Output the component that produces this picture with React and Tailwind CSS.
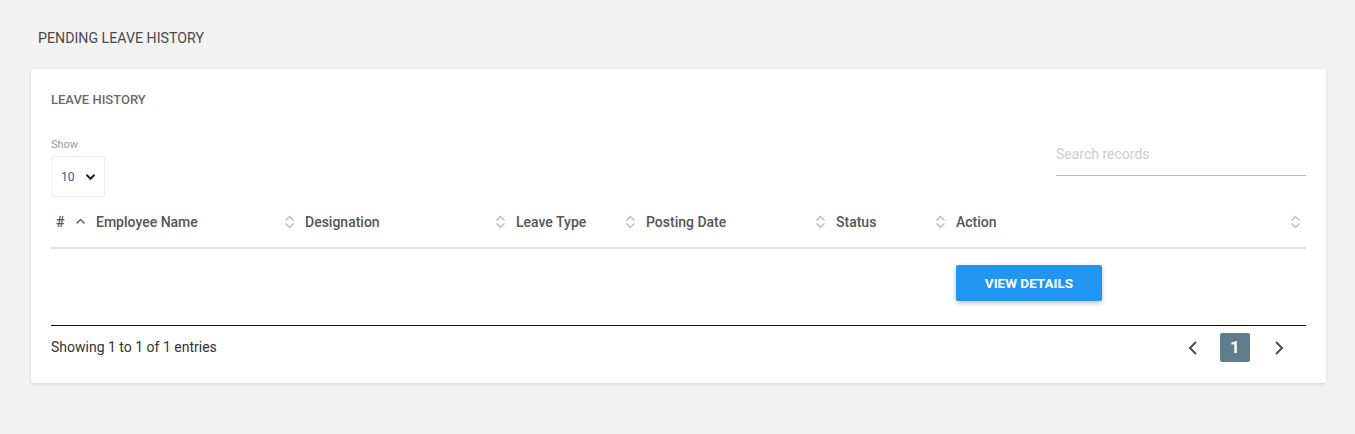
import React from 'react';

function SortIcon({ active }) {
  if (active) {
    return (
      <svg width="11" height="10" viewBox="0 0 11 10" className="text-[#666]">
        <path d="M1.5 6.5 L5.5 2.5 L9.5 6.5" fill="none" stroke="currentColor" strokeWidth="1.5" />
      </svg>
    );
  }
  return (
    <svg width="11" height="14" viewBox="0 0 11 14" className="text-[#bbb]">
      <path d="M1.5 5.5 L5.5 1.5 L9.5 5.5 M1.5 8.5 L5.5 12.5 L9.5 8.5" fill="none" stroke="currentColor" strokeWidth="1.3" />
    </svg>
  );
}

const columns = [
  { label: '#', width: 'w-[40px]', active: true },
  { label: 'Employee Name', width: 'w-[209px]' },
  { label: 'Designation', width: 'w-[211px]' },
  { label: 'Leave Type', width: 'w-[130px]' },
  { label: 'Posting Date', width: 'w-[190px]' },
  { label: 'Status', width: 'w-[120px]' },
  { label: 'Action', width: 'flex-1' },
];

export default function App() {
  return (
    <div className="min-h-[434px] bg-[#f3f3f3] px-[31px] pt-[29px] pb-[51px] font-['Roboto',sans-serif]">
      {/* Page title */}
      <h1 className="pl-[7px] text-[14.2px] leading-[18px] text-[#4a4a4a] uppercase mb-[22px]">
        Pending Leave History
      </h1>

      {/* Card */}
      <div className="w-[1295px] bg-white rounded-[2px] shadow-[0_1px_3px_rgba(0,0,0,0.15)] px-[20px] pt-[24px] pb-[21px]">
        <h2 className="text-[13px] leading-[14px] font-medium text-[#6b6b6b] uppercase mb-[32px]">
          Leave History
        </h2>

        {/* Controls */}
        <div className="flex justify-between items-end">
          <div>
            <div className="text-[11px] leading-[12px] text-[#999] mb-[5px]">Show</div>
            <div className="w-[54px] h-[41px] border border-[#eee] rounded-[2px] flex items-center justify-between pl-[9px] pr-[8px]">
              <span className="text-[12px] text-[#1d5ea8]">10</span>
              <svg width="11" height="8" viewBox="0 0 11 8" className="text-[#222]">
                <path d="M1.5 1.8 L5.5 5.8 L9.5 1.8" fill="none" stroke="currentColor" strokeWidth="2" />
              </svg>
            </div>
          </div>
          <div className="w-[250px] mb-[21px] border-b border-[#bbb] pb-[9px]">
            <input
              placeholder="Search records"
              className="w-full text-[14px] leading-[16px] text-[#333] placeholder:text-[#ccc] outline-none"
            />
          </div>
        </div>

        {/* Table header */}
        <div className="flex border-b-2 border-[#e3e3e3] h-[52px] items-center">
          {columns.map((col, i) => (
            <div key={i} className={`${col.width} flex items-center justify-between pl-[5px] pr-[5px] shrink-0`}>
              <span className="text-[14px] font-medium text-[#555]">{col.label}</span>
              <SortIcon active={col.active} />
            </div>
          ))}
        </div>

        {/* Row */}
        <div className="flex h-[77px] border-b border-[#111] pt-[16px]">
          <div className="w-[900px] shrink-0" />
          <div className="pl-[5px]">
            <button className="w-[146px] h-[36px] bg-[#2196f3] text-white text-[13.5px] font-bold uppercase rounded-[2px] shadow-[0_2px_5px_rgba(0,0,0,0.25)]">
              View Details
            </button>
          </div>
        </div>

        {/* Footer */}
        <div className="flex justify-between items-center pt-[7px]">
          <span className="text-[14px] text-[#333]">Showing 1 to 1 of 1 entries</span>
          <div className="flex items-center mr-[20px]">
            <svg width="14" height="16" viewBox="0 0 14 16" className="text-[#555] mr-[20px]">
              <path d="M10 2 L4 8 L10 14" fill="none" stroke="currentColor" strokeWidth="2.2" />
            </svg>
            <div className="w-[30px] h-[29px] bg-[#607d8b] rounded-[2px] flex items-center justify-center text-white text-[17px] font-bold">
              1
            </div>
            <svg width="14" height="16" viewBox="0 0 14 16" className="text-[#555] ml-[22px]">
              <path d="M4 2 L10 8 L4 14" fill="none" stroke="currentColor" strokeWidth="2.2" />
            </svg>
          </div>
        </div>
      </div>
    </div>
  );
}
